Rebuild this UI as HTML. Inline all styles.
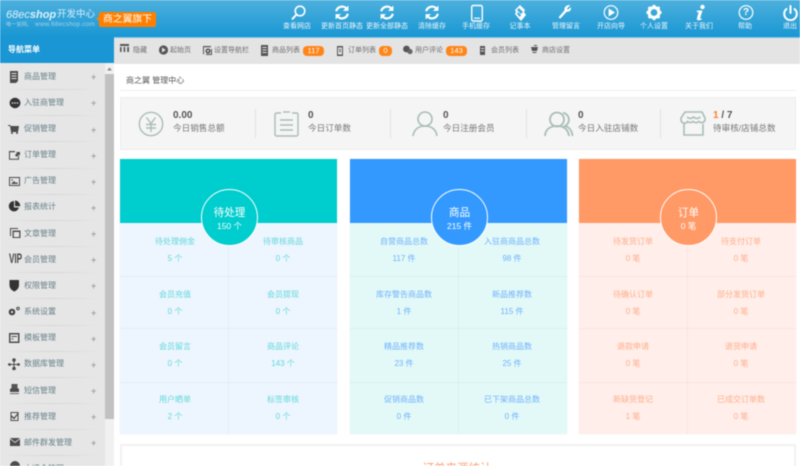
<!DOCTYPE html>
<html lang="zh">
<head>
<meta charset="utf-8">
<title>管理中心</title>
<style>
*{margin:0;padding:0;box-sizing:border-box}
html,body{width:800px;height:466px;overflow:hidden;background:#fff}
body{font-family:"Liberation Sans","Noto Sans CJK SC",sans-serif}
#w{position:relative;width:800px;height:466px;overflow:hidden;filter:blur(.4px)}
.a{position:absolute}
.t{position:absolute;white-space:nowrap;line-height:12px;height:12px}
.c{transform:translateX(-50%)}
.h{font-size:7px;color:#eaf6fc;top:21px}
.b{position:absolute;top:46px;height:10px;border-radius:4px;background:#ff8518;color:#fff;font-size:7.6px;line-height:10px;text-align:center}
.tb{font-size:7px;color:#6e6e6e;top:45px}
.m{font-size:8px;color:#688088;left:24px}
.p{font-size:9px;color:#a5a5a5;left:91px;font-weight:bold}
.sep{position:absolute;left:3px;width:98px;height:1px;background:linear-gradient(90deg,#e6e6e6,#d6d6d6 50%,#e6e6e6)}
.n{font-size:10px;font-weight:bold;color:#555;top:110px}
.l{font-size:8.6px;color:#777;top:122px}
.dv{position:absolute;top:109px;width:1px;height:29px;background:#e2e2e2}
.card{position:absolute;top:159px;width:217px;height:275px;box-shadow:0 0 1px #e4e4e4}
.card .hd{position:absolute;left:0;top:0;width:217px;height:64px}
.card i{position:absolute;background:rgba(120,140,140,.07)}
.ci{position:absolute;width:57px;height:57px;border-radius:50%;border:1px solid #fff;top:30px;left:81px;color:#fff;text-align:center}
.ci b{display:block;font-weight:normal;font-size:10.6px;line-height:14px;margin-top:16px}
.ci span{display:block;font-size:8.5px;line-height:11px;margin-top:1px}
.k{font-size:8px;transform:translateX(-50%)}
</style>
</head>
<body>
<div id="w">
<!-- top bars -->
<div class="a" style="left:0;top:0;width:800px;height:38px;background:linear-gradient(#4db0dd,#1796d3)"></div>
<div class="a" style="left:0;top:37px;width:114px;height:26px;background:#1a96d4"></div>
<div class="a" style="left:114px;top:37px;width:686px;height:1px;background:#7cc3e6"></div>
<div class="a" style="left:114px;top:38px;width:686px;height:26px;background:#e4e4e4"></div>
<!-- sidebar -->
<div class="a" style="left:0;top:63px;width:105px;height:403px;background:#e6e6e6"></div>
<div class="a" style="left:105px;top:63px;width:9px;height:403px;background:#f1f1f1"></div>
<div class="a" style="left:105px;top:74px;width:9px;height:345px;background:#c1c1c1"></div>
<div class="sep" style="top:89px"></div><div class="sep" style="top:115px"></div><div class="sep" style="top:141px"></div><div class="sep" style="top:168px"></div><div class="sep" style="top:194px"></div><div class="sep" style="top:220px"></div><div class="sep" style="top:246px"></div><div class="sep" style="top:272px"></div><div class="sep" style="top:298px"></div><div class="sep" style="top:325px"></div><div class="sep" style="top:351px"></div><div class="sep" style="top:377px"></div><div class="sep" style="top:403px"></div><div class="sep" style="top:429px"></div><div class="sep" style="top:455px"></div>
<!-- stats panel -->
<div class="a" style="left:120px;top:90px;width:676px;height:1px;background:#eee"></div>
<div class="a" style="left:120px;top:97px;width:676px;height:53px;background:#f5f5f5;border:1px solid #eee"></div>
<div class="dv" style="left:255px"></div><div class="dv" style="left:390px"></div><div class="dv" style="left:526px"></div><div class="dv" style="left:660px"></div>
<!-- cards -->
<div class="card" style="left:120px;background:#edf5fe">
 <div class="hd" style="background:#00cdcd"></div>
 <i style="left:108px;top:64px;width:1px;height:211px"></i><i style="left:0;top:117px;width:217px;height:1px"></i><i style="left:0;top:169px;width:217px;height:1px"></i><i style="left:0;top:223px;width:217px;height:1px"></i>
 <div class="ci" style="background:#00cdcd"><b>待处理</b><span>150 个</span></div>
</div>
<div class="card" style="left:350px;background:#e3f9f8">
 <div class="hd" style="background:#3399ff"></div>
 <i style="left:108px;top:64px;width:1px;height:211px"></i><i style="left:0;top:117px;width:217px;height:1px"></i><i style="left:0;top:169px;width:217px;height:1px"></i><i style="left:0;top:223px;width:217px;height:1px"></i>
 <div class="ci" style="background:#3399ff"><b>商品</b><span>215 件</span></div>
</div>
<div class="card" style="left:579px;background:#ffeee9">
 <div class="hd" style="background:#ff9966"></div>
 <i style="left:108px;top:64px;width:1px;height:211px"></i><i style="left:0;top:117px;width:217px;height:1px"></i><i style="left:0;top:169px;width:217px;height:1px"></i><i style="left:0;top:223px;width:217px;height:1px"></i>
 <div class="ci" style="background:#ff9966"><b>订单</b><span>0 笔</span></div>
</div>
<!-- bottom box -->
<div class="a" style="left:120px;top:444px;width:676px;height:30px;border:2px solid #f2f2f2;background:#fff"></div>
<div class="t c" style="left:457px;top:463px;font-size:11.5px;color:#ff9a70">订单来源统计</div>

<!-- icons -->
<svg class="a" style="left:0;top:0" width="800" height="466" viewBox="0 0 800 466">
 <!-- logo badge -->
 <path d="M99 14a2 2 0 0 1 2-2h53a2 2 0 0 1 2 2v11a2 2 0 0 1-2 2h-53a2 2 0 0 1-2-2v-4l-3-2 3-2z" fill="#ff8000"/>
 <!-- header icons -->
 <g fill="none" stroke="#fff" stroke-width="1.6" stroke-linecap="round">
  <circle cx="300" cy="11" r="4.8"/><path d="M296.500 14.500L292.500 18.800" stroke-width="2"/>
  <rect x="471.700" y="5.500" width="10.600" height="15.500" rx="1.500" stroke-width="1.400"/>
  <circle cx="611" cy="12.500" r="6.800" stroke-width="1.200"/>
  <circle cx="746" cy="12.500" r="6.800" stroke-width="1.200"/>
  <path d="M786.500 9a6.300 6.300 0 1 0 8 0" stroke-width="2"/><path d="M790.500 6v7" stroke-width="2"/>
 </g>
 <rect x="474" y="17.600" width="6" height="1.200" fill="#fff"/>
 <g transform="translate(342 12.500)" fill="none" stroke="#fff" stroke-width="2.200"><path d="M-5.800 -1.200A6 6 0 0 1 4 -4.400"/><path d="M5.800 1.200A6 6 0 0 1 -4 4.400"/><path d="M6.400 -7V-1.600H1z" fill="#fff" stroke="none"/><path d="M-6.400 7V1.600H-1z" fill="#fff" stroke="none"/></g>
 <g transform="translate(387 12.500)" fill="none" stroke="#fff" stroke-width="2.200"><path d="M-5.800 -1.200A6 6 0 0 1 4 -4.400"/><path d="M5.800 1.200A6 6 0 0 1 -4 4.400"/><path d="M6.400 -7V-1.600H1z" fill="#fff" stroke="none"/><path d="M-6.400 7V1.600H-1z" fill="#fff" stroke="none"/></g>
 <g transform="translate(432 12.500)" fill="none" stroke="#fff" stroke-width="2.200"><path d="M-5.800 -1.200A6 6 0 0 1 4 -4.400"/><path d="M5.800 1.200A6 6 0 0 1 -4 4.400"/><path d="M6.400 -7V-1.600H1z" fill="#fff" stroke="none"/><path d="M-6.400 7V1.600H-1z" fill="#fff" stroke="none"/></g>
 <path d="M520 5l5 5-1 2 2 3-5 6-6-7 1-2-1-2zM519 8l-2 2 4 4 2-2zM518 12l-1 2 3 3 1-2z" fill="#fff" fill-rule="evenodd"/>
 <path d="M570 5.500l-3 3 .8 1.200 3-2.400c.8 2.800-1.400 5-4.200 4.400l-6.400 7-1.600-1.400 6-7c-.8-3 1.800-5.400 5.400-5.300z" fill="#fff"/>
 <path d="M608.600 8.500v8l6.400-4z" fill="#fff"/>
 <g transform="translate(654 12.500)"><circle r="5" fill="none" stroke="#fff" stroke-width="3.200"/><g stroke="#fff" stroke-width="2.600"><path d="M0-7.600V-5M0 5V7.600M-7.600 0H-5M5 0H7.600M-5.400-5.400L-3.600-3.600M3.600 3.600L5.400 5.400M-5.400 5.400L-3.600 3.600M3.600-3.600L5.400-5.400"/></g></g>
 <circle cx="702.500" cy="7" r="2.200" fill="#fff"/><path d="M697 10.500h5.500l-2.300 7.500c0 1 .7 1 1.700.4l.3.5c-1.700 1.700-5.400 2.300-5.400 0l1.800-6.800h-1.900z" fill="#fff"/>

 <!-- tab icons -->
 <g fill="#555">
  <path d="M120 44h9v2h-9zM120 47h1.600v5H120zM123.600 47h1.600v5h-1.600zM127.200 47h1.800v5h-1.800z"/>
  <circle cx="163.500" cy="50" r="4.600"/><path d="M162 47.500v5l3.800-2.500z" fill="#e4e4e4"/>
  <path d="M203 46h8v1.200h-7v7h-1zM206 54h5v-5h1v6h-6z"/><circle cx="208" cy="51" r="2.600"/><circle cx="208" cy="51" r="1" fill="#e4e4e4"/>
  <path d="M261 45h7v11h-7zM262.400 47v1h4.200v-1zM262.400 49.500v1h4.200v-1zM262.400 52v1h4.200v-1z" fill-rule="evenodd"/>
  <path d="M337 46h6v10h-6zM338 47.500v7h4v-7zM339 49h2l-1 2h1v1h-2l1-2h-1z" fill-rule="evenodd"/>
  <circle cx="406.500" cy="49" r="3.400"/><circle cx="410" cy="51.500" r="2.600" fill="#666"/>
  <path d="M480 46h5v9h-5zM481 48v1h3v-1zM481 50.500v1h3v-1z" fill-rule="evenodd"/>
  <path d="M531 47h7l-1 4h-5zM532.500 52h4v1h-4zM534 45h3v1h-3z"/>
 </g>
 <!-- sidebar icons -->
 <path d="M108.500 67.500l2.500 3h-5z" fill="#888" transform="translate(1 0)"/>
 <g fill="#4c4c4c">
  <path d="M10 71h8v10l-2 2h-6zM11.500 73v1h5v-1zM11.500 75.500v1h5v-1zM11.500 78v1h5v-1z" fill-rule="evenodd"/>
  <ellipse cx="15" cy="103" rx="5.400" ry="5.200" fill="#333"/>
  <circle cx="12.500" cy="103" r=".8" fill="#eee"/><circle cx="15" cy="103" r=".8" fill="#eee"/><circle cx="17.500" cy="103" r=".8" fill="#eee"/>
  <path d="M8 125h2l1 1h8l-1 6h-7l-1-6H8z"/><circle cx="12" cy="133" r="1"/><circle cx="17" cy="133" r="1"/>
  <path d="M9 151h6v1.200h-5v6.600h8v-3h1v4H9z"/><path d="M15 155l2-2-1-1h4v3.600l-1-1-2.500 2.400z"/>
  <path d="M9 177h11v9H9zM10 178v7h9v-7z" fill-rule="evenodd"/><path d="M11 184l3-3 2 2 1-1 1 2z"/><circle cx="12" cy="180" r=".8"/>
  <path d="M14 201a5.200 5.200 0 1 0 5 6.500h-5zM15 200.500v5.800h5.200a5.500 5.500 0 0 0-5.200-5.800z" fill="#333"/>
  <path d="M10 228h8v1h-7v7h-1zM12.500 230.500h8v7.500h-8zM13.800 232v5h5.400v-5z" fill-rule="evenodd"/>
  <path d="M9.500 280h9.500v5c0 3.500-2.500 5.500-4.700 6.500-2.300-1-4.800-3-4.800-6.500z" fill="#333"/>
  <circle cx="12" cy="312" r="2.200" fill="none" stroke="#444" stroke-width="2.200"/><circle cx="18" cy="308.500" r="1.300" fill="none" stroke="#444" stroke-width="1"/>
  <path d="M9 333h10.500v10H9zM10.500 334.500v7h7.500v-7z" fill-rule="evenodd"/><path d="M11.500 336h5.500v1h-5.500zM11.500 338.500h2v1h-2z"/>
  <circle cx="14" cy="360" r="1.800"/><circle cx="9.500" cy="364.500" r="1.400"/><circle cx="18.500" cy="364.500" r="1.400"/><circle cx="14" cy="368.500" r="1.800"/><path d="M9 364h10v1H9zM13.500 360h1v8h-1z"/>
  <path d="M10 389l4.500-3 4.500 3v5h-9z"/><path d="M11.500 384h6v3.500l-3 1.500-3-1.500z" fill="#555"/><path d="M10 392h9v1.200h-9z" fill="#eee"/>
  <path d="M10.500 412h8v9h-8zM11.500 413v7h6v-7z" fill-rule="evenodd"/><path d="M12 415.500l2 2 4-5 1 .8-5 6.200-3-3z"/>
  <path d="M10 438h10v8H10z"/><path d="M10 438l5 4 5-4v1l-5 4-5-4z" fill="#e6e6e6"/>
  <circle cx="15" cy="466" r="5"/>
 </g>
 <!-- stat icons -->
 <g fill="none" stroke="#a9bdb7" stroke-width="1.400">
  <circle cx="151" cy="124" r="11.700"/><path d="M146.500 117.500l4.500 6 4.500-6M146 124.500h10M146 128h10M151 124v8"/>
  <path d="M281 113h-4.500a1.500 1.500 0 0 0-1.500 1.500v20a1.500 1.500 0 0 0 1.500 1.500h20a1.500 1.500 0 0 0 1.500-1.500v-20a1.500 1.500 0 0 0-1.500-1.500H292"/><path d="M283 112h7"/><path d="M280 120h13M280 125h13M280 130h13"/>
  <path d="M413 136c1-7 6-10 12-10s11 3 12 10" stroke-width="1.600"/><circle cx="425" cy="119" r="7" stroke-width="1.600"/>
  <circle cx="557" cy="119.500" r="7" stroke-width="1.800"/><path d="M545 136c.5-7 5.500-10 12-10s11 3 12 10" stroke-width="1.800"/><path d="M563 112.800a7 7 0 0 1 2 13.200c4 1 7 4.500 7.500 10" stroke-width="1.800"/>
  <path d="M685 112h17l3 6v2a3.500 3.500 0 0 1-6 1.500 4.500 4.500 0 0 1-6 0 4.500 4.500 0 0 1-5.500 0 3.500 3.500 0 0 1-6.500-1.500v-2z" stroke-width="1.600"/><path d="M684 124v11h19v-11M687 117c3 2 4 2 6.500 0 2.500 2 4 2 7 0" stroke-width="1.600"/>
 </g>
</svg>

<!-- logo text -->
<div class="t" style="left:6px;top:8px;font-size:11px;color:#dff1fa;font-style:italic;line-height:14px;height:14px">68ec<b>shop</b></div>
<div class="t" style="left:57px;top:9px;font-size:9.500px;color:#d7eef9">开发中心</div>
<div class="t" style="left:6px;top:19px;font-size:5.200px;color:#9fd3ec">唯一官网。</div>
<div class="t" style="left:35px;top:19px;font-size:6.400px;color:#9fd3ec;letter-spacing:.2px">www.68ecshop.com</div>
<div class="t" style="left:103px;top:13.500px;font-size:9.800px;color:#fff">商之翼旗下</div>
<div class="t" style="left:8px;top:44px;font-size:8px;color:#fff;font-weight:bold">导航菜单</div>

<!-- header labels -->
<div class="t c" style="left:746px;top:6.500px;font-size:10px;font-weight:bold;color:#fff">?</div>
<div class="t h c" style="left:297px">查看网店</div>
<div class="t h c" style="left:342px">更新首页静态</div>
<div class="t h c" style="left:387px">更新全部静态</div>
<div class="t h c" style="left:432px">清除缓存</div>
<div class="t h c" style="left:476px">手机缓存</div>
<div class="t h c" style="left:520px">记事本</div>
<div class="t h c" style="left:566px">管理留言</div>
<div class="t h c" style="left:611px">开店向导</div>
<div class="t h c" style="left:654px">个人设置</div>
<div class="t h c" style="left:699px">关于我们</div>
<div class="t h c" style="left:745px">帮助</div>
<div class="t h c" style="left:790px">退出</div>

<!-- tabs -->
<div class="t tb" style="left:133px">隐藏</div>
<div class="t tb" style="left:170px">起始页</div>
<div class="t tb" style="left:214px">设置导航栏</div>
<div class="t tb" style="left:272px">商品列表</div>
<div class="b" style="left:303px;width:21px">117</div>
<div class="t tb" style="left:348px">订单列表</div>
<div class="b" style="left:379px;width:13px">0</div>
<div class="t tb" style="left:415px">用户评论</div>
<div class="b" style="left:446px;width:21px">143</div>
<div class="t tb" style="left:491px">会员列表</div>
<div class="t tb" style="left:542px">商店设置</div>

<!-- menu -->
<div class="t m" style="top:71px">商品管理</div><div class="t p" style="top:71px">+</div>
<div class="t m" style="top:97px">入驻商管理</div><div class="t p" style="top:97px">+</div>
<div class="t m" style="top:123px">促销管理</div><div class="t p" style="top:124px">+</div>
<div class="t m" style="top:149px">订单管理</div><div class="t p" style="top:150px">+</div>
<div class="t m" style="top:175px">广告管理</div><div class="t p" style="top:176px">+</div>
<div class="t m" style="top:201px">报表统计</div><div class="t p" style="top:202px">+</div>
<div class="t m" style="top:228px">文章管理</div><div class="t p" style="top:228px">+</div>
<div class="t m" style="top:254px">会员管理</div><div class="t p" style="top:254px">+</div>
<div class="t" style="left:8.500px;top:253px;font-size:13.500px;font-weight:bold;color:#444;transform:scaleX(.6);transform-origin:left">VIP</div>
<div class="t m" style="top:280px">权限管理</div><div class="t p" style="top:280px">+</div>
<div class="t m" style="top:306px">系统设置</div><div class="t p" style="top:307px">+</div>
<div class="t m" style="top:332px">模板管理</div><div class="t p" style="top:333px">+</div>
<div class="t m" style="top:358px">数据库管理</div><div class="t p" style="top:359px">+</div>
<div class="t m" style="top:385px">短信管理</div><div class="t p" style="top:385px">+</div>
<div class="t m" style="top:411px">推荐管理</div><div class="t p" style="top:411px">+</div>
<div class="t m" style="top:437px">邮件群发管理</div><div class="t p" style="top:437px">+</div>
<div class="t m" style="top:463px">大通令管理</div>

<!-- title -->
<div class="t" style="left:126px;top:75px;font-size:8px;color:#555">商之翼 管理中心</div>

<!-- stats -->
<div class="t n" style="left:173px">0.00</div><div class="t l" style="left:173px">今日销售总额</div>
<div class="t n" style="left:308px">0</div><div class="t l" style="left:308px">今日订单数</div>
<div class="t n" style="left:443px">0</div><div class="t l" style="left:443px">今日注册会员</div>
<div class="t n" style="left:578px">0</div><div class="t l" style="left:578px">今日入驻店铺数</div>
<div class="t n" style="left:713px"><span style="color:#ff7e33">1</span> / 7</div><div class="t l" style="left:713px">待审核/店铺总数</div>

<!-- card 1 -->
<div style="color:#62d8dc">
<div class="t k" style="left:175px;top:236px">待处理佣金</div><div class="t k" style="left:175px;top:252.500px">5 个</div>
<div class="t k" style="left:283px;top:236px">待审核商品</div><div class="t k" style="left:283px;top:252.500px">0 个</div>
<div class="t k" style="left:175px;top:289px">会员充值</div><div class="t k" style="left:175px;top:306px">0 个</div>
<div class="t k" style="left:283px;top:289px">会员提现</div><div class="t k" style="left:283px;top:306px">0 个</div>
<div class="t k" style="left:175px;top:341px">会员留言</div><div class="t k" style="left:175px;top:358px">0 个</div>
<div class="t k" style="left:283px;top:341px">商品评论</div><div class="t k" style="left:283px;top:358px">143 个</div>
<div class="t k" style="left:175px;top:394px">用户晒单</div><div class="t k" style="left:175px;top:411px">2 个</div>
<div class="t k" style="left:283px;top:394px">标签审核</div><div class="t k" style="left:283px;top:411px">0 个</div>
</div>
<!-- card 2 -->
<div style="color:#70b2fb">
<div class="t k" style="left:404px;top:236px">自营商品总数</div><div class="t k" style="left:404px;top:252.500px">117 件</div>
<div class="t k" style="left:512px;top:236px">入驻商商品总数</div><div class="t k" style="left:512px;top:252.500px">98 件</div>
<div class="t k" style="left:404px;top:289px">库存警告商品数</div><div class="t k" style="left:404px;top:306px">1 件</div>
<div class="t k" style="left:512px;top:289px">新品推荐数</div><div class="t k" style="left:512px;top:306px">115 件</div>
<div class="t k" style="left:404px;top:341px">精品推荐数</div><div class="t k" style="left:404px;top:358px">23 件</div>
<div class="t k" style="left:512px;top:341px">热销商品数</div><div class="t k" style="left:512px;top:358px">25 件</div>
<div class="t k" style="left:404px;top:394px">促销商品数</div><div class="t k" style="left:404px;top:411px">0 件</div>
<div class="t k" style="left:512px;top:394px">已下架商品总数</div><div class="t k" style="left:512px;top:411px">0 件</div>
</div>
<!-- card 3 -->
<div style="color:#ffae8c">
<div class="t k" style="left:633px;top:236px">待发货订单</div><div class="t k" style="left:633px;top:252.500px">0 笔</div>
<div class="t k" style="left:741px;top:236px">待支付订单</div><div class="t k" style="left:741px;top:252.500px">0 笔</div>
<div class="t k" style="left:633px;top:289px">待确认订单</div><div class="t k" style="left:633px;top:306px">0 笔</div>
<div class="t k" style="left:741px;top:289px">部分发货订单</div><div class="t k" style="left:741px;top:306px">0 笔</div>
<div class="t k" style="left:633px;top:341px">退款申请</div><div class="t k" style="left:633px;top:358px">0 笔</div>
<div class="t k" style="left:741px;top:341px">退货申请</div><div class="t k" style="left:741px;top:358px">0 笔</div>
<div class="t k" style="left:633px;top:394px">新缺货登记</div><div class="t k" style="left:633px;top:411px">1 笔</div>
<div class="t k" style="left:741px;top:394px">已成交订单数</div><div class="t k" style="left:741px;top:411px">0 笔</div>
</div>
</div>
</body>
</html>
